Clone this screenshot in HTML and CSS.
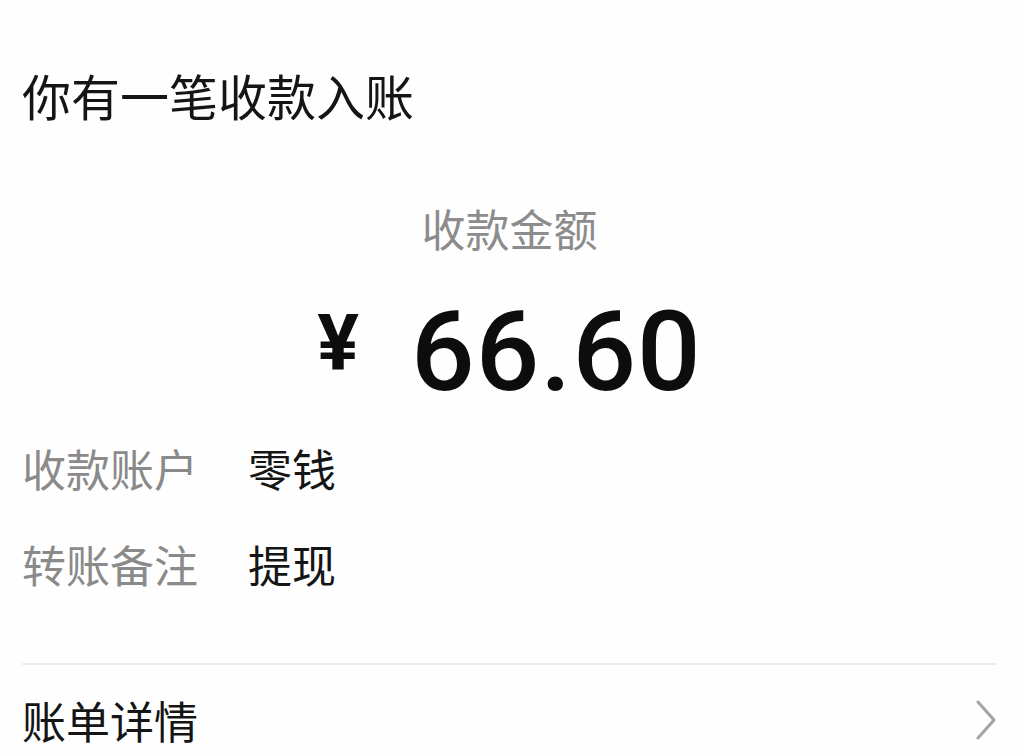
FILE: index.html
```html
<!DOCTYPE html>
<html lang="zh-CN">
<head>
<meta charset="utf-8">
<title>收款</title>
<link rel="stylesheet" href="styles.css">
</head>
<body>
<main class="page">
  <h1 class="title">你有一笔收款入账</h1>
  <div class="subtitle">收款金额</div>
  <div class="amount">
    <span class="currency">¥</span>
    <span class="value">66.60</span>
  </div>
  <div class="rows">
    <div class="row">
      <span class="label">收款账户</span>
      <span class="val">零钱</span>
    </div>
    <div class="row">
      <span class="label">转账备注</span>
      <span class="val">提现</span>
    </div>
  </div>
  <div class="divider"></div>
  <div class="detail">
    <span class="detail-text">账单详情</span>
    <svg class="chevron" width="22" height="40" viewBox="0 0 22 40" aria-hidden="true">
      <path d="M3 2 L19 20 L3 38" fill="none" stroke="#a3a3a3" stroke-width="3" stroke-linecap="round" stroke-linejoin="round"/>
    </svg>
  </div>
</main>
</body>
</html>
```

FILE: styles.css
```css
html, body {
  margin: 0;
  padding: 0;
  background: #fefefe;
}

body {
  font-family: "Noto Sans CJK SC", "Noto Sans", sans-serif;
  color: #141414;
  overflow: hidden;
  height: 755px;
}

.page {
  padding: 65px 27px 0 22px;
  display: flex;
  flex-direction: column;
}

.title {
  margin: 0;
  font-size: 49px;
  font-weight: 400;
  line-height: 60px;
  color: #151515;
}

.subtitle {
  margin-top: 73px;
  font-size: 44px;
  line-height: 60px;
  color: #8c8c8c;
  text-align: center;
}

.amount {
  margin-top: 34px;
  height: 120px;
  display: flex;
  justify-content: center;
  align-items: flex-start;
  color: #0d0d0d;
}

.currency {
  font-family: "Roboto", "Liberation Sans", sans-serif;
  font-weight: 700;
  font-size: 78px;
  line-height: 78px;
  margin-top: 13px;
  margin-right: 52px;
}

.value {
  font-family: "Roboto", "Liberation Sans", sans-serif;
  font-weight: 500;
  font-size: 112px;
  line-height: 120px;
  letter-spacing: 1px;
}

.rows {
  margin-top: 26px;
  display: flex;
  flex-direction: column;
  gap: 36px;
}

.row {
  display: flex;
  font-size: 44px;
  line-height: 60px;
}

.label {
  width: 226px;
  color: #8a8a8a;
}

.val {
  color: #151515;
}

.divider {
  margin-top: 69px;
  height: 2px;
  background: #ececec;
}

.detail {
  margin-top: 25px;
  display: flex;
  justify-content: space-between;
  align-items: center;
  font-size: 44px;
  line-height: 60px;
  color: #151515;
}

.chevron {
  display: block;
  margin-right: 0;
}
```
